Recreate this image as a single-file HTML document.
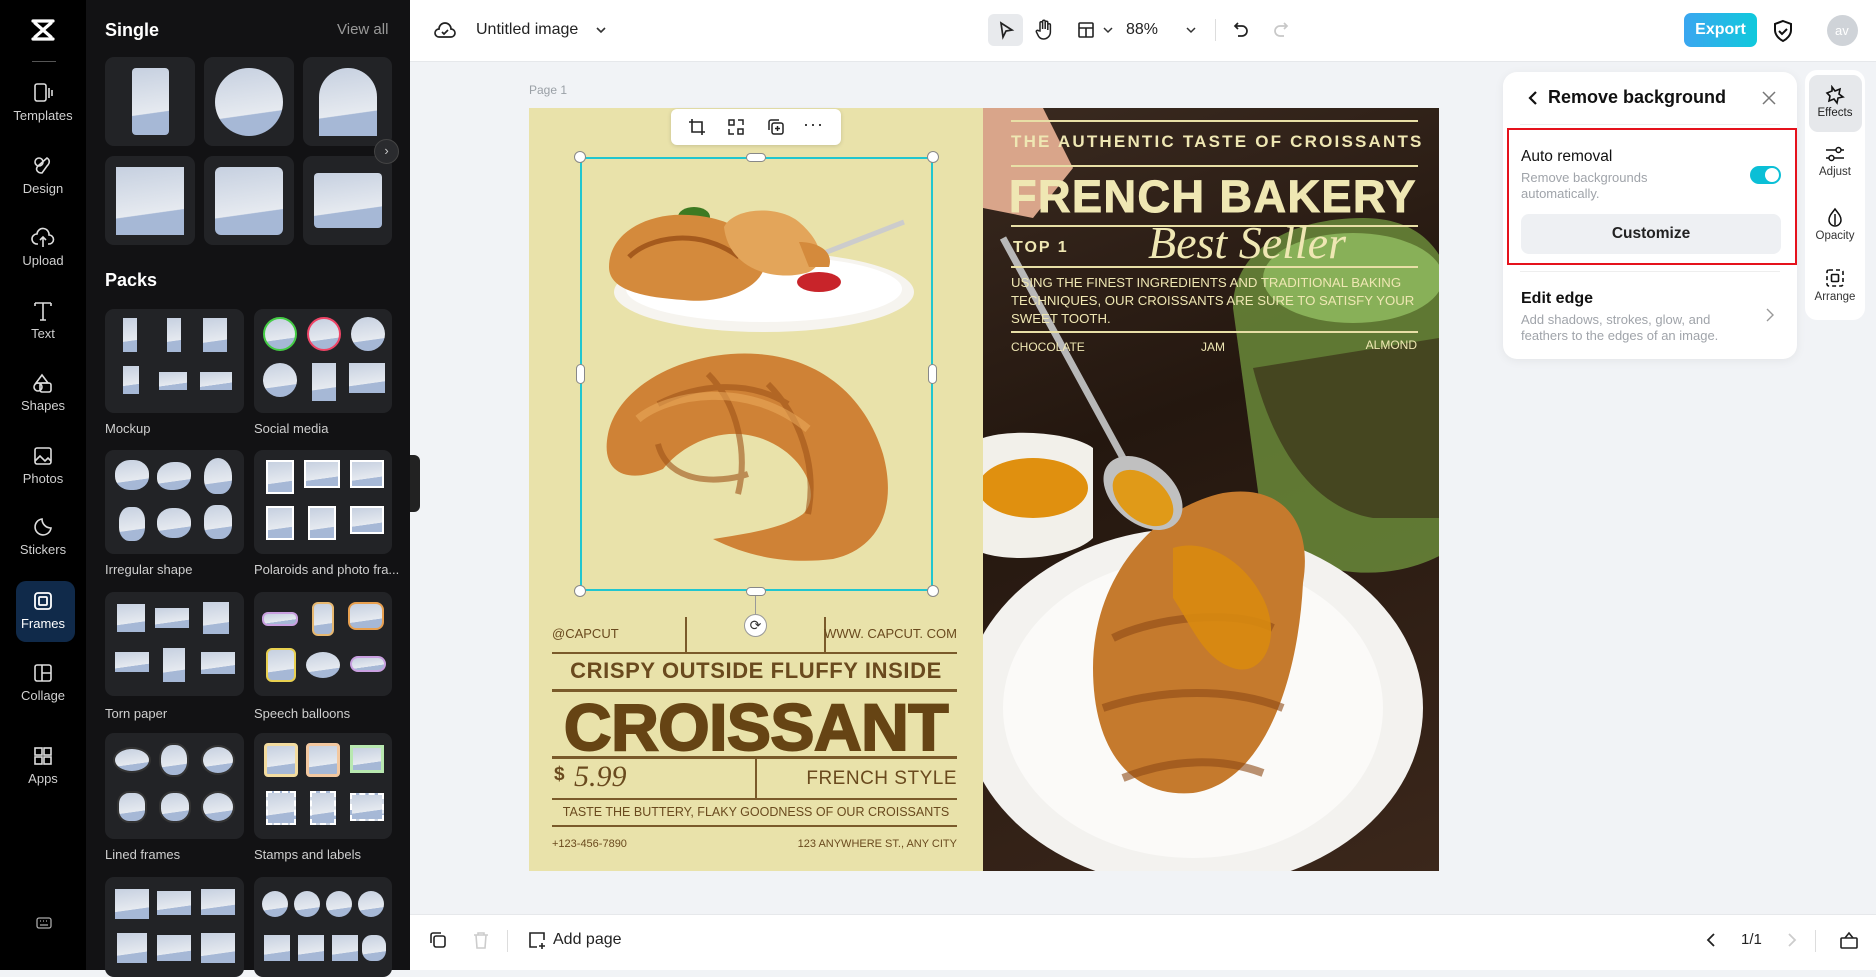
<!DOCTYPE html>
<html><head><meta charset="utf-8"><style>
*{box-sizing:border-box;margin:0;padding:0}
body{width:1876px;height:970px;overflow:hidden;background:#f1f3f6;font-family:"Liberation Sans",sans-serif;position:relative}
.a{position:absolute}
.nav{left:0;top:0;width:86px;height:970px;background:#000}
.navi{position:absolute;left:0;width:86px;text-align:center;color:#d0d0d0;font-size:13px}
.navi svg{display:block;margin:0 auto 4px}
.panel{left:86px;top:0;width:324px;height:970px;background:#121214}
.card{position:absolute;background:#222326;border-radius:9px}
.sky{position:absolute;background:linear-gradient(172deg,#c6d0e0 0%,#e6eaf0 66%,#a6b8d6 67%)}
.lbl{position:absolute;color:#cfcfcf;font-size:13px}
.top{left:410px;top:0;width:1466px;height:62px;background:#fff;border-bottom:1px solid #e6e8eb}
.bot{left:410px;top:914px;width:1466px;height:56px;background:#fff;border-top:1px solid #e6e8eb}
.cr{color:#6a4a1e;font-weight:bold;position:absolute}
.ln{position:absolute;background:#7a5a2a;height:2px}
.pt{color:#efe7b3;position:absolute}
.pl{position:absolute;background:#e8dfa6;height:1.5px;left:1011px;width:407px}
</style></head><body>

<div class="a nav">
  <svg class="a" style="left:29px;top:17px" width="28" height="26" viewBox="0 0 28 26"><path d="M4 4h20M4 22h20M6 6l16 14M22 6L6 20" fill="none" stroke="#fff" stroke-width="3.2" stroke-linecap="round"/></svg>
  <div class="a" style="left:32px;top:61px;width:24px;height:1px;background:#555"></div>
  <div class="navi" style="top:82px"><svg width="22" height="22" viewBox="0 0 22 22" fill="none" stroke="#ddd" stroke-width="1.6"><rect x="3" y="2" width="11" height="17" rx="2"/><path d="M17 6v10M20 8v6"/></svg>Templates</div>
  <div class="navi" style="top:155px"><svg width="22" height="22" viewBox="0 0 22 22" fill="none" stroke="#ddd" stroke-width="1.6"><circle cx="7" cy="7" r="4"/><path d="M10 18c-5 0-7-4-4-7l9-8c3 2 3 5 0 8l-5 7z"/></svg>Design</div>
  <div class="navi" style="top:227px"><svg width="24" height="22" viewBox="0 0 24 22" fill="none" stroke="#ddd" stroke-width="1.6"><path d="M7 17H6a5 5 0 0 1 0-10 6 6 0 0 1 12 1 4 4 0 0 1 0 9h-1M12 10v10M9 13l3-3 3 3"/></svg>Upload</div>
  <div class="navi" style="top:300px"><svg width="22" height="22" viewBox="0 0 22 22" fill="none" stroke="#ddd" stroke-width="1.6"><path d="M3 3h16M11 3v17M3 3v3M19 3v3M8 20h6"/></svg>Text</div>
  <div class="navi" style="top:372px"><svg width="22" height="22" viewBox="0 0 22 22" fill="none" stroke="#ddd" stroke-width="1.6"><path d="M10 3l6 8H4z"/><rect x="8" y="11" width="11" height="9" rx="2"/><circle cx="6" cy="15" r="4"/></svg>Shapes</div>
  <div class="navi" style="top:445px"><svg width="22" height="22" viewBox="0 0 22 22" fill="none" stroke="#ddd" stroke-width="1.6"><rect x="3" y="3" width="16" height="16" rx="2"/><path d="M3 16l5-5 5 5 3-3 3 3"/></svg>Photos</div>
  <div class="navi" style="top:516px"><svg width="22" height="22" viewBox="0 0 22 22" fill="none" stroke="#ddd" stroke-width="1.6"><path d="M19 12A8 8 0 1 1 10 3c0 5 4 9 9 9z"/></svg>Stickers</div>
  <div class="a" style="left:16px;top:581px;width:59px;height:61px;border-radius:10px;background:#102a4a"></div>
  <div class="navi" style="top:590px;color:#fff"><svg width="22" height="22" viewBox="0 0 22 22" fill="none" stroke="#fff" stroke-width="1.8"><rect x="3" y="3" width="16" height="16" rx="3"/><rect x="7" y="7" width="8" height="8" rx="1"/></svg>Frames</div>
  <div class="navi" style="top:662px"><svg width="22" height="22" viewBox="0 0 22 22" fill="none" stroke="#ddd" stroke-width="1.6"><rect x="3" y="3" width="16" height="16" rx="2"/><path d="M10 3v16M10 11h9"/></svg>Collage</div>
  <div class="navi" style="top:745px"><svg width="22" height="22" viewBox="0 0 22 22" fill="none" stroke="#ddd" stroke-width="1.6"><rect x="3" y="3" width="7" height="7"/><rect x="12" y="3" width="7" height="7"/><rect x="3" y="12" width="7" height="7"/><rect x="12" y="12" width="7" height="7"/></svg>Apps</div>
  <svg class="a" style="left:36px;top:917px" width="16" height="12" viewBox="0 0 16 12" fill="none" stroke="#aaa" stroke-width="1.3"><rect x="1" y="1" width="14" height="10" rx="2"/><path d="M4 8h8M4 4h1M7 4h1M10 4h1"/></svg>
</div>

<div class="a panel">
  <div class="a" style="left:19px;top:20px;color:#fff;font-weight:bold;font-size:18px">Single</div>
  <div class="a" style="left:251px;top:21px;color:#999;font-size:15px">View all</div>
  <div class="card" style="left:19px;top:57px;width:90px;height:89px"><div class="sky" style="left:27px;top:11px;width:37px;height:67px;border-radius:4px"></div></div>
  <div class="card" style="left:118px;top:57px;width:90px;height:89px"><div class="sky" style="left:11px;top:11px;width:68px;height:68px;border-radius:50%"></div></div>
  <div class="card" style="left:217px;top:57px;width:89px;height:89px"><div class="sky" style="left:16px;top:11px;width:58px;height:68px;border-radius:29px 29px 0 0"></div></div>
  <div class="card" style="left:19px;top:156px;width:90px;height:89px"><div class="sky" style="left:11px;top:11px;width:68px;height:68px"></div></div>
  <div class="card" style="left:118px;top:156px;width:90px;height:89px"><div class="sky" style="left:11px;top:11px;width:68px;height:68px;border-radius:6px"></div></div>
  <div class="card" style="left:217px;top:156px;width:89px;height:89px"><div class="sky" style="left:11px;top:17px;width:68px;height:55px;border-radius:4px"></div></div>
  <div class="a" style="left:288px;top:139px;width:25px;height:25px;border-radius:50%;background:#2a2b2e;border:1px solid #444;color:#ccc;font-size:13px;text-align:center;line-height:22px">›</div>
  <div class="a" style="left:19px;top:270px;color:#fff;font-weight:bold;font-size:18px">Packs</div>

  <div class="card" style="left:19px;top:309px;width:139px;height:104px">
    <div class="sky" style="left:18px;top:9px;width:14px;height:34px"></div><div class="sky" style="left:62px;top:9px;width:14px;height:34px"></div><div class="sky" style="left:98px;top:9px;width:24px;height:34px"></div>
    <div class="sky" style="left:18px;top:57px;width:16px;height:28px"></div><div class="sky" style="left:54px;top:63px;width:28px;height:18px"></div><div class="sky" style="left:95px;top:63px;width:32px;height:18px"></div></div>
  <div class="lbl" style="left:19px;top:421px">Mockup</div>
  <div class="card" style="left:168px;top:309px;width:138px;height:104px">
    <div class="sky" style="left:9px;top:8px;width:34px;height:34px;border-radius:50%;border:2px solid #4c4"></div><div class="sky" style="left:53px;top:8px;width:34px;height:34px;border-radius:50%;border:2px solid #e46"></div><div class="sky" style="left:97px;top:8px;width:34px;height:34px;border-radius:50%"></div>
    <div class="sky" style="left:9px;top:54px;width:34px;height:34px;border-radius:50%"></div><div class="sky" style="left:58px;top:54px;width:24px;height:38px"></div><div class="sky" style="left:95px;top:54px;width:36px;height:30px"></div></div>
  <div class="lbl" style="left:168px;top:421px">Social media</div>
  <div class="card" style="left:19px;top:450px;width:139px;height:104px">
    <div class="sky" style="left:10px;top:10px;width:34px;height:30px;border-radius:45%"></div><div class="sky" style="left:52px;top:12px;width:34px;height:28px;border-radius:50% 40%"></div><div class="sky" style="left:99px;top:8px;width:28px;height:36px;border-radius:50% 50% 40% 40%"></div>
    <div class="sky" style="left:14px;top:57px;width:26px;height:34px;border-radius:40%"></div><div class="sky" style="left:52px;top:58px;width:34px;height:30px;border-radius:45%"></div><div class="sky" style="left:99px;top:55px;width:28px;height:34px;border-radius:40%"></div></div>
  <div class="lbl" style="left:19px;top:562px">Irregular shape</div>
  <div class="card" style="left:168px;top:450px;width:138px;height:104px">
    <div class="sky" style="left:12px;top:10px;width:28px;height:34px;border:2px solid #fff"></div><div class="sky" style="left:50px;top:10px;width:36px;height:28px;border:2px solid #fff"></div><div class="sky" style="left:96px;top:10px;width:34px;height:28px;border:2px solid #fff"></div>
    <div class="sky" style="left:12px;top:56px;width:28px;height:34px;border:2px solid #fff"></div><div class="sky" style="left:54px;top:56px;width:28px;height:34px;border:2px solid #fff"></div><div class="sky" style="left:96px;top:56px;width:34px;height:28px;border:2px solid #fff"></div></div>
  <div class="lbl" style="left:168px;top:562px">Polaroids and photo fra...</div>
  <div class="card" style="left:19px;top:592px;width:139px;height:104px">
    <div class="sky" style="left:12px;top:12px;width:28px;height:28px"></div><div class="sky" style="left:50px;top:16px;width:34px;height:20px"></div><div class="sky" style="left:98px;top:10px;width:26px;height:32px"></div>
    <div class="sky" style="left:10px;top:60px;width:34px;height:20px"></div><div class="sky" style="left:58px;top:56px;width:22px;height:34px"></div><div class="sky" style="left:96px;top:60px;width:34px;height:22px"></div></div>
  <div class="lbl" style="left:19px;top:706px">Torn paper</div>
  <div class="card" style="left:168px;top:592px;width:138px;height:104px">
    <div class="sky" style="left:8px;top:20px;width:36px;height:14px;border-radius:6px;border:2px solid #c9a0e0"></div><div class="sky" style="left:58px;top:10px;width:22px;height:34px;border-radius:6px;border:2px solid #e7b870"></div><div class="sky" style="left:94px;top:10px;width:36px;height:28px;border-radius:8px;border:2px solid #e8a050"></div>
    <div class="sky" style="left:12px;top:56px;width:30px;height:34px;border-radius:6px;border:2px solid #e8d050"></div><div class="sky" style="left:52px;top:60px;width:34px;height:26px;border-radius:50%"></div><div class="sky" style="left:96px;top:64px;width:36px;height:16px;border-radius:8px;border:2px solid #c9a0e0"></div></div>
  <div class="lbl" style="left:168px;top:706px">Speech balloons</div>
  <div class="card" style="left:19px;top:733px;width:139px;height:106px">
    <div class="sky" style="left:8px;top:14px;width:38px;height:26px;border-radius:50%;border:2px solid #333"></div><div class="sky" style="left:54px;top:10px;width:30px;height:34px;border-radius:45%;border:2px solid #333"></div><div class="sky" style="left:96px;top:12px;width:34px;height:30px;border-radius:50%;border:2px solid #333"></div>
    <div class="sky" style="left:12px;top:58px;width:30px;height:32px;border-radius:40%;border:2px solid #333"></div><div class="sky" style="left:54px;top:58px;width:32px;height:32px;border-radius:45%;border:2px solid #333"></div><div class="sky" style="left:96px;top:58px;width:34px;height:32px;border-radius:50%;border:2px solid #333"></div></div>
  <div class="lbl" style="left:19px;top:847px">Lined frames</div>
  <div class="card" style="left:168px;top:733px;width:138px;height:106px">
    <div class="sky" style="left:10px;top:10px;width:34px;height:34px;border:3px solid #f3dca0;border-radius:4px"></div><div class="sky" style="left:52px;top:10px;width:34px;height:34px;border:3px solid #f3c8a0;border-radius:4px"></div><div class="sky" style="left:96px;top:12px;width:34px;height:28px;border:3px solid #b8e8b0"></div>
    <div class="sky" style="left:12px;top:58px;width:30px;height:34px;border:2px dashed #fff"></div><div class="sky" style="left:56px;top:58px;width:26px;height:34px;border:2px dashed #fff"></div><div class="sky" style="left:96px;top:60px;width:34px;height:28px;border:2px dashed #fff"></div></div>
  <div class="lbl" style="left:168px;top:847px">Stamps and labels</div>
  <div class="card" style="left:19px;top:877px;width:139px;height:100px">
    <div class="sky" style="left:10px;top:12px;width:34px;height:30px"></div><div class="sky" style="left:52px;top:14px;width:34px;height:24px"></div><div class="sky" style="left:96px;top:12px;width:34px;height:26px"></div>
    <div class="sky" style="left:12px;top:56px;width:30px;height:30px"></div><div class="sky" style="left:52px;top:58px;width:34px;height:26px"></div><div class="sky" style="left:96px;top:56px;width:34px;height:30px"></div></div>
  <div class="card" style="left:168px;top:877px;width:138px;height:100px">
    <div class="sky" style="left:8px;top:14px;width:26px;height:26px;border-radius:50%"></div><div class="sky" style="left:40px;top:14px;width:26px;height:26px;border-radius:50%"></div><div class="sky" style="left:72px;top:14px;width:26px;height:26px;border-radius:50%"></div><div class="sky" style="left:104px;top:14px;width:26px;height:26px;border-radius:50%"></div>
    <div class="sky" style="left:10px;top:58px;width:26px;height:26px"></div><div class="sky" style="left:44px;top:58px;width:26px;height:26px"></div><div class="sky" style="left:78px;top:58px;width:26px;height:26px"></div><div class="sky" style="left:108px;top:58px;width:24px;height:26px;border-radius:40%"></div></div>
</div>
<div class="a" style="left:410px;top:455px;width:10px;height:57px;background:#222;border-radius:0 6px 6px 0"></div>

<div class="a top">
  <svg class="a" style="left:24px;top:20px" width="22" height="20" viewBox="0 0 22 20" fill="none" stroke="#222" stroke-width="1.7"><path d="M6 17H5a4 4 0 0 1 0-8 6 6 0 0 1 12 0 4 4 0 0 1 0 8H6z"/><path d="M8 12l2 2 4-4"/></svg>
  <div class="a" style="left:66px;top:21px;font-size:16px;color:#222">Untitled image</div>
  <svg class="a" style="left:185px;top:25px" width="12" height="10" viewBox="0 0 12 10" fill="none" stroke="#333" stroke-width="1.6"><path d="M2 3l4 4 4-4"/></svg>
  <div class="a" style="left:578px;top:14px;width:35px;height:32px;border-radius:6px;background:#e8eaed"></div>
  <svg class="a" style="left:586px;top:20px" width="20" height="20" viewBox="0 0 20 20" fill="none" stroke="#222" stroke-width="1.7"><path d="M5 3l11 7-6 1-3 6z"/></svg>
  <svg class="a" style="left:624px;top:19px" width="20" height="22" viewBox="0 0 20 22" fill="none" stroke="#222" stroke-width="1.5"><path d="M6 12V4a1.3 1.3 0 0 1 2.6 0v6V2.5a1.3 1.3 0 0 1 2.6 0V10V3.5a1.3 1.3 0 0 1 2.6 0V11V6a1.3 1.3 0 0 1 2.6 0v7a7 7 0 0 1-7 7 6 6 0 0 1-5-3l-2-4a1.3 1.3 0 0 1 2.2-1.3z"/></svg>
  <svg class="a" style="left:667px;top:21px" width="18" height="18" viewBox="0 0 18 18" fill="none" stroke="#222" stroke-width="1.6"><rect x="2" y="2" width="14" height="14" rx="1"/><path d="M2 7h14M9 7v9"/></svg>
  <svg class="a" style="left:692px;top:25px" width="12" height="10" viewBox="0 0 12 10" fill="none" stroke="#333" stroke-width="1.5"><path d="M2 3l4 4 4-4"/></svg>
  <div class="a" style="left:716px;top:21px;font-size:16px;color:#222">88%</div>
  <svg class="a" style="left:775px;top:25px" width="12" height="10" viewBox="0 0 12 10" fill="none" stroke="#333" stroke-width="1.5"><path d="M2 3l4 4 4-4"/></svg>
  <div class="a" style="left:805px;top:19px;width:1px;height:22px;background:#ddd"></div>
  <svg class="a" style="left:822px;top:20px" width="18" height="20" viewBox="0 0 18 20" fill="none" stroke="#222" stroke-width="1.7"><path d="M6 3L3 6l3 3M3 6h7a5 5 0 0 1 0 10H6"/></svg>
  <svg class="a" style="left:862px;top:20px" width="18" height="20" viewBox="0 0 18 20" fill="none" stroke="#c8c8c8" stroke-width="1.7"><path d="M12 3l3 3-3 3M15 6H8a5 5 0 0 0 0 10h4"/></svg>
  <div class="a" style="left:1274px;top:13px;width:73px;height:34px;border-radius:7px;background:linear-gradient(90deg,#3aa6f0,#10c9dc);color:#fff;font-weight:bold;font-size:16px;text-align:center;line-height:34px">Export</div>
  <svg class="a" style="left:1362px;top:19px" width="22" height="24" viewBox="0 0 22 24" fill="none" stroke="#111" stroke-width="2"><path d="M11 2l8 3v6c0 5-4 9-8 11-4-2-8-6-8-11V5z"/><path d="M7 12l3 3 5-5"/></svg>
  <div class="a" style="left:1417px;top:15px;width:31px;height:31px;border-radius:50%;background:#cfd3d8;overflow:hidden;color:#fff;font-size:13px;line-height:31px;padding-left:8px">av</div>
</div>

<div class="a" style="left:529px;top:83px;font-size:12px;color:#9aa0a6">Page 1</div>

<div class="a" style="left:529px;top:108px;width:454px;height:763px;background:#e9e2aa;overflow:hidden">
  <svg class="a" style="left:75px;top:89px" width="320" height="140" viewBox="0 0 320 140">
    <ellipse cx="160" cy="95" rx="150" ry="40" fill="#f6f4ef"/><ellipse cx="160" cy="92" rx="138" ry="33" fill="#fff"/>
    <path d="M210 60L300 25" stroke="#ccc" stroke-width="5"/>
    <ellipse cx="215" cy="85" rx="22" ry="10" fill="#c8242a"/>
    <ellipse cx="90" cy="20" rx="16" ry="10" fill="#3d7a22"/>
    <path d="M5 70c0-35 40-55 80-52 40 2 70 20 75 45s-40 45-80 40C30 100 5 90 5 70z" fill="#d48a3c"/>
    <path d="M25 60c20-20 70-30 110 0" stroke="#a55a1d" stroke-width="5" fill="none"/>
    <path d="M120 30c10-20 55-22 75-5s30 40 10 50c-30 10-80 0-85-45z" fill="#e3a55a"/>
    <path d="M195 45c20 0 35 10 30 25l-20 0z" fill="#d48a3c"/>
  </svg>
  <svg class="a" style="left:69px;top:236px" width="310" height="220" viewBox="0 0 310 220">
    <path d="M10 90C20 40 90 5 160 10c70 5 110 50 125 100 15 55-5 95-50 105-40 5-80 0-120-20 30-5 70-10 90-25 20-20 0-60-40-75-40-15-80 5-100 30C30 140 2 130 10 90z" fill="#cf8236"/>
    <path d="M60 60c40-20 90-25 130 0M110 30c30 30 40 80 30 120M170 40c30 30 50 80 40 130M60 100c10 40 60 40 90 30" stroke="#9e5319" stroke-width="6" fill="none" opacity=".6"/>
    <path d="M40 75c30-25 110-40 170 10" stroke="#f0b060" stroke-width="8" fill="none" opacity=".5"/>
  </svg>
  <div class="a" style="left:156px;top:509px;width:2px;height:35px;background:#7a5a2a"></div>
  <div class="a" style="left:295px;top:509px;width:2px;height:35px;background:#7a5a2a"></div>
  <div class="cr" style="left:23px;top:518px;font-size:13px;font-weight:normal">@CAPCUT</div>
  <div class="cr" style="right:26px;top:518px;font-size:13px;font-weight:normal">WWW. CAPCUT. COM</div>
  <div class="ln" style="left:23px;top:544px;width:405px"></div>
  <div class="cr" style="left:0;width:454px;text-align:center;top:550px;font-size:22px;letter-spacing:.6px">CRISPY OUTSIDE FLUFFY INSIDE</div>
  <div class="ln" style="left:23px;top:581px;width:405px;height:3px"></div>
  <div class="cr" style="left:0;width:454px;text-align:center;top:588px;font-size:66px;font-weight:900;color:#664414;letter-spacing:-.5px;line-height:62px;-webkit-text-stroke:2px #664414">CROISSANT</div>
  <div class="ln" style="left:23px;top:648px;width:405px;height:3px"></div>
  <div class="cr" style="left:25px;top:656px;font-size:19px">$</div>
  <div class="cr" style="left:45px;top:652px;font-size:30px;font-weight:normal;font-style:italic;font-family:'Liberation Serif',serif">5.99</div>
  <div class="a" style="left:226px;top:650px;width:2px;height:41px;background:#7a5a2a"></div>
  <div class="cr" style="right:26px;top:660px;font-size:19px;font-weight:normal;letter-spacing:.5px">FRENCH STYLE</div>
  <div class="ln" style="left:23px;top:690px;width:405px"></div>
  <div class="cr" style="left:0;width:454px;text-align:center;top:697px;font-size:12.5px;font-weight:normal">TASTE THE BUTTERY, FLAKY GOODNESS OF OUR CROISSANTS</div>
  <div class="ln" style="left:23px;top:717px;width:405px"></div>
  <div class="cr" style="left:23px;top:730px;font-size:11px;font-weight:normal">+123-456-7890</div>
  <div class="cr" style="right:26px;top:730px;font-size:11px;font-weight:normal">123 ANYWHERE ST., ANY CITY</div>
</div>

<div class="a" style="left:983px;top:108px;width:456px;height:763px;background:linear-gradient(160deg,#3a2a20 0%,#24170f 40%,#3b271b 100%);overflow:hidden">
  <svg class="a" style="left:0;top:0" width="456" height="763" viewBox="0 0 456 763">
    <path d="M250 200c0-60 60-90 130-90s90 50 90 90v240c-60 40-150 30-190-20z" fill="#6a8a3a" opacity=".85"/>
    <ellipse cx="370" cy="170" rx="90" ry="45" fill="#88b058"/>
    <path d="M270 260c20 80 60 140 120 150l66 0V230z" fill="#3a3018" opacity=".7"/>
    <path d="M0 330c30-10 90-5 110 10v90c-20 20-80 25-110 15z" fill="#f2f0ea"/>
    <ellipse cx="50" cy="380" rx="55" ry="30" fill="#e0900f"/>
    <ellipse cx="210" cy="600" rx="230" ry="180" fill="#f3f2ef"/>
    <ellipse cx="210" cy="600" rx="190" ry="150" fill="#fbfaf8"/>
    <path d="M110 560c0-90 60-160 130-175 60-10 90 30 80 90-5 100-40 200-110 210-60 5-100-40-100-125z" fill="#c57a2d"/>
    <path d="M130 530c40-20 120-30 160-10M120 600c60-20 130-20 180 0M140 670c50-20 100-20 140-5" stroke="#8e4a15" stroke-width="8" fill="none" opacity=".6"/>
    <path d="M190 440c30-10 70 10 90 50s0 80-30 70-40-40-60-70z" fill="#d88a10" opacity=".9"/>
    <path d="M0 0h60l30 60-40 50-50-10z" fill="#d9a58a"/>
    <path d="M20 130l120 220" stroke="#b8b8b8" stroke-width="7"/>
    <ellipse cx="160" cy="385" rx="45" ry="30" fill="#c0c0c0" transform="rotate(40 160 385)"/>
    <ellipse cx="160" cy="390" rx="35" ry="22" fill="#e09a18" transform="rotate(40 160 390)"/>
  </svg>
  <div class="pl" style="left:28px;top:12px"></div>
  <div class="pt" style="left:28px;top:24px;font-size:17px;font-weight:bold;letter-spacing:2.2px">THE AUTHENTIC TASTE OF CROISSANTS</div>
  <div class="pl" style="left:28px;top:57px"></div>
  <div class="pt" style="left:26px;top:63px;font-size:45px;font-weight:900;letter-spacing:1.5px;line-height:52px;-webkit-text-stroke:1px #efe7b3">FRENCH BAKERY</div>
  <div class="pl" style="left:28px;top:117px"></div>
  <div class="pt" style="left:30px;top:131px;font-size:16px;font-weight:bold;letter-spacing:2px">TOP 1</div>
  <div class="pt" style="left:165px;top:108px;font-size:46px;font-style:italic;font-family:'Liberation Serif',serif">Best Seller</div>
  <div class="pl" style="left:28px;top:158px"></div>
  <div class="pt" style="left:28px;top:166px;font-size:13.2px;line-height:18px;width:430px;white-space:nowrap">USING THE FINEST INGREDIENTS AND TRADITIONAL BAKING<br>TECHNIQUES, OUR CROISSANTS ARE SURE TO SATISFY YOUR<br>SWEET TOOTH.</div>
  <div class="pl" style="left:28px;top:223px"></div>
  <div class="pt" style="left:28px;top:232px;font-size:12px">CHOCOLATE</div>
  <div class="pt" style="left:218px;top:232px;font-size:12px">JAM</div>
  <div class="pt" style="right:22px;top:230px;font-size:12px">ALMOND</div>
</div>

<div class="a" style="left:580px;top:157px;width:353px;height:434px;border:2px solid #21c6cf"></div>
<div class="a" style="left:574px;top:151px;width:12px;height:12px;border-radius:50%;background:#fff;border:1px solid #888"></div>
<div class="a" style="left:927px;top:151px;width:12px;height:12px;border-radius:50%;background:#fff;border:1px solid #888"></div>
<div class="a" style="left:574px;top:585px;width:12px;height:12px;border-radius:50%;background:#fff;border:1px solid #888"></div>
<div class="a" style="left:927px;top:585px;width:12px;height:12px;border-radius:50%;background:#fff;border:1px solid #888"></div>
<div class="a" style="left:746px;top:153px;width:20px;height:9px;border-radius:5px;background:#fff;border:1px solid #888"></div>
<div class="a" style="left:746px;top:587px;width:20px;height:9px;border-radius:5px;background:#fff;border:1px solid #888"></div>
<div class="a" style="left:576px;top:364px;width:9px;height:20px;border-radius:5px;background:#fff;border:1px solid #888"></div>
<div class="a" style="left:928px;top:364px;width:9px;height:20px;border-radius:5px;background:#fff;border:1px solid #888"></div>
<div class="a" style="left:755px;top:596px;width:1px;height:18px;background:#999"></div>
<div class="a" style="left:744px;top:614px;width:23px;height:23px;border-radius:50%;background:#fff;border:1px solid #999;text-align:center;font-size:14px;line-height:21px;color:#333">⟳</div>
<div class="a" style="left:671px;top:109px;width:170px;height:36px;background:#fff;border-radius:6px;box-shadow:0 1px 4px rgba(0,0,0,.15)"></div>
<svg class="a" style="left:687px;top:117px" width="20" height="20" viewBox="0 0 20 20" fill="none" stroke="#222" stroke-width="1.6"><path d="M5 2v13h13M2 5h13v13"/></svg>
<svg class="a" style="left:726px;top:117px" width="20" height="20" viewBox="0 0 20 20" fill="none" stroke="#222" stroke-width="1.5"><rect x="3" y="3" width="5" height="5"/><rect x="12" y="12" width="5" height="5"/><path d="M12 3h5v5M3 12v5h5"/></svg>
<svg class="a" style="left:766px;top:117px" width="20" height="20" viewBox="0 0 20 20" fill="none" stroke="#222" stroke-width="1.5"><rect x="6" y="6" width="11" height="11" rx="2"/><path d="M3 13V5a2 2 0 0 1 2-2h8M11.5 9v5M9 11.5h5"/></svg>
<div class="a" style="left:803px;top:114px;font-size:18px;color:#222;letter-spacing:1px">···</div>

<div class="a" style="left:1503px;top:72px;width:294px;height:287px;background:#fff;border-radius:14px;box-shadow:0 2px 10px rgba(0,0,0,.06)"></div>
<svg class="a" style="left:1527px;top:90px" width="12" height="16" viewBox="0 0 12 16" fill="none" stroke="#111" stroke-width="2.2"><path d="M9 2L3 8l6 6"/></svg>
<div class="a" style="left:1548px;top:87px;font-size:18px;font-weight:bold;color:#111">Remove background</div>
<svg class="a" style="left:1762px;top:91px" width="14" height="14" viewBox="0 0 14 14" stroke="#777" stroke-width="1.5"><path d="M1 1l12 12M13 1L1 13"/></svg>
<div class="a" style="left:1520px;top:124px;width:260px;height:1px;background:#eee"></div>
<div class="a" style="left:1507px;top:128px;width:290px;height:137px;border:2px solid #e5121c"></div>
<div class="a" style="left:1521px;top:148px;font-size:15.5px;color:#111">Auto removal</div>
<div class="a" style="left:1521px;top:170px;font-size:13px;color:#a0a4aa;line-height:16px">Remove backgrounds<br>automatically.</div>
<div class="a" style="left:1750px;top:166px;width:31px;height:18px;border-radius:9px;background:#0bbfd6"></div>
<div class="a" style="left:1765px;top:168px;width:14px;height:14px;border-radius:50%;background:#fff"></div>
<div class="a" style="left:1521px;top:214px;width:260px;height:40px;border-radius:8px;background:#eef0f3;text-align:center;line-height:40px;font-size:15.5px;font-weight:bold;color:#222">Customize</div>
<div class="a" style="left:1520px;top:271px;width:260px;height:1px;background:#eee"></div>
<div class="a" style="left:1521px;top:290px;font-size:16px;font-weight:bold;color:#111">Edit edge</div>
<div class="a" style="left:1521px;top:312px;font-size:13px;color:#a0a4aa;line-height:15.5px">Add shadows, strokes, glow, and<br>feathers to the edges of an image.</div>
<svg class="a" style="left:1766px;top:308px" width="8" height="14" viewBox="0 0 8 14" fill="none" stroke="#999" stroke-width="1.4"><path d="M1 1l6 6-6 6"/></svg>

<div class="a" style="left:1805px;top:70px;width:60px;height:250px;background:#fff;border-radius:12px"></div>
<div class="a" style="left:1809px;top:75px;width:53px;height:57px;border-radius:9px;background:#e6e8eb"></div>
<div class="a" style="left:1805px;top:85px;width:60px;text-align:center;font-size:11.5px;color:#222"><svg width="20" height="20" viewBox="0 0 20 20" fill="none" stroke="#111" stroke-width="1.6" style="display:block;margin:0 auto 2px"><path d="M7 2l3 4 5-2-1 5 4 3-5 1-1 5-3-4-5 2 1-5-3-3 5-2z"/></svg>Effects</div>
<div class="a" style="left:1805px;top:145px;width:60px;text-align:center;font-size:11.5px;color:#333"><svg width="22" height="18" viewBox="0 0 22 18" fill="none" stroke="#111" stroke-width="1.5" style="display:block;margin:0 auto 3px"><path d="M2 5h10M17 5h3M2 13h3M10 13h10"/><circle cx="14.5" cy="5" r="2.5"/><circle cx="7.5" cy="13" r="2.5"/></svg>Adjust</div>
<div class="a" style="left:1805px;top:207px;width:60px;text-align:center;font-size:11.5px;color:#333"><svg width="18" height="20" viewBox="0 0 18 20" fill="none" stroke="#111" stroke-width="1.5" style="display:block;margin:0 auto 3px"><path d="M9 2c3 4 6 7 6 11a6 6 0 0 1-12 0c0-4 3-7 6-11z"/><path d="M9 7v11" /></svg>Opacity</div>
<div class="a" style="left:1805px;top:268px;width:60px;text-align:center;font-size:11.5px;color:#333"><svg width="20" height="20" viewBox="0 0 20 20" fill="none" stroke="#111" stroke-width="1.6" style="display:block;margin:0 auto 3px"><rect x="2" y="2" width="16" height="16" rx="2" stroke-dasharray="4 3"/><rect x="6.5" y="6.5" width="7" height="7" rx="1"/></svg>Arrange</div>

<div class="a bot">
  <svg class="a" style="left:18px;top:15px" width="20" height="20" viewBox="0 0 20 20" fill="none" stroke="#222" stroke-width="1.6"><rect x="6" y="6" width="11" height="11" rx="2"/><path d="M3 13V5a2 2 0 0 1 2-2h8"/></svg>
  <svg class="a" style="left:62px;top:15px" width="18" height="20" viewBox="0 0 18 20" fill="none" stroke="#ccc" stroke-width="1.6"><path d="M2 5h14M6 5V3h6v2M4 5l1 13h8l1-13"/></svg>
  <div class="a" style="left:97px;top:15px;width:1px;height:22px;background:#ddd"></div>
  <svg class="a" style="left:117px;top:15px" width="20" height="20" viewBox="0 0 20 20" fill="none" stroke="#222" stroke-width="1.6"><path d="M17 10V3H3v14h7M15 13v6M12 16h6"/></svg>
  <div class="a" style="left:143px;top:16px;font-size:16px;color:#222">Add page</div>
  <svg class="a" style="left:1296px;top:17px" width="10" height="16" viewBox="0 0 10 16" fill="none" stroke="#222" stroke-width="1.8"><path d="M8 2L2 8l6 6"/></svg>
  <div class="a" style="left:1331px;top:16px;font-size:15px;color:#222">1/1</div>
  <svg class="a" style="left:1377px;top:17px" width="10" height="16" viewBox="0 0 10 16" fill="none" stroke="#ccc" stroke-width="1.8"><path d="M2 2l6 6-6 6"/></svg>
  <div class="a" style="left:1405px;top:15px;width:1px;height:22px;background:#ddd"></div>
  <svg class="a" style="left:1429px;top:15px" width="20" height="20" viewBox="0 0 20 20" fill="none" stroke="#222" stroke-width="1.6"><rect x="2" y="8" width="16" height="10" rx="1"/><path d="M6 8l4-5 4 5"/></svg>
</div>
</body></html>
